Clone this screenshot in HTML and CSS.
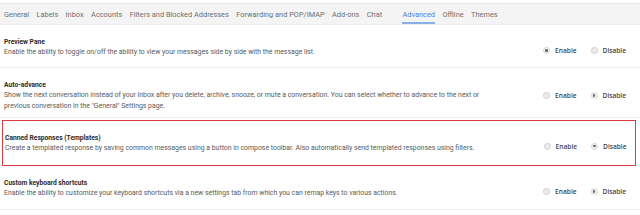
FILE: index.html
```html
<!DOCTYPE html>
<html>
<head>
<meta charset="utf-8">
<link rel="stylesheet" href="styles.css">
</head>
<body>
<div class="tabs">
  <span class="tab">General</span>
  <span class="tab">Labels</span>
  <span class="tab">Inbox</span>
  <span class="tab">Accounts</span>
  <span class="tab">Filters and Blocked Addresses</span>
  <span class="tab">Forwarding and POP/IMAP</span>
  <span class="tab">Add-ons</span>
  <span class="tab">Chat</span>
  <span class="tab active">Advanced</span>
  <span class="tab">Offline</span>
  <span class="tab">Themes</span>
</div>

<div class="row row-first">
  <div class="info">
    <div class="title">Preview Pane</div>
    <div class="desc">Enable the ability to toggle on/off the ability to view your messages side by side with the message list.</div>
  </div>
  <div class="opts">
    <span class="opt"><span class="radio on"></span>Enable</span>
    <span class="opt"><span class="radio"></span>Disable</span>
  </div>
</div>

<div class="row row-auto">
  <div class="info">
    <div class="title">Auto-advance</div>
    <div class="desc">Show the next conversation instead of your inbox after you delete, archive, snooze, or mute a conversation. You can select whether to advance to the next or previous conversation in the "General" Settings page.</div>
  </div>
  <div class="opts">
    <span class="opt"><span class="radio"></span>Enable</span>
    <span class="opt"><span class="radio on"></span>Disable</span>
  </div>
</div>

<div class="row row-canned">
  <div class="info">
    <div class="title">Canned Responses (Templates)</div>
    <div class="desc">Create a templated response by saving common messages using a button in compose toolbar. Also automatically send templated responses using filters.</div>
  </div>
  <div class="opts">
    <span class="opt"><span class="radio"></span>Enable</span>
    <span class="opt"><span class="radio on"></span>Disable</span>
  </div>
</div>

<div class="row row-custom">
  <div class="info">
    <div class="title">Custom keyboard shortcuts</div>
    <div class="desc">Enable the ability to customize your keyboard shortcuts via a new settings tab from which you can remap keys to various actions.</div>
  </div>
  <div class="opts">
    <span class="opt"><span class="radio"></span>Enable</span>
    <span class="opt"><span class="radio on"></span>Disable</span>
  </div>
</div>
</body>
</html>
```

FILE: styles.css
```css
html, body {
  margin: 0;
  padding: 0;
  background: #ffffff;
}
body {
  font-family: Roboto, "Liberation Sans", Arial, sans-serif;
  color: #222;
  width: 640px;
  height: 215px;
  overflow: hidden;
}
.tabs {
  margin-top: 3px;
  height: 20px;
  background: #f4f4f4;
  border-top: 1px solid #e6e6e6;
  border-bottom: 1px solid #ececec;
  display: flex;
  align-items: stretch;
  padding-left: 4px;
  gap: 7.4px;
  font-size: 7.4px;
  color: #707070;
}
.tab {
  display: flex;
  align-items: center;
  border-bottom: 2px solid transparent;
  box-sizing: border-box;
  padding-top: 2px;
}
.tab.active {
  color: #4d7ed6;
  border-bottom-color: #8ab0ea;
  margin-left: 13px;
}
.row {
  display: flex;
  align-items: center;
  padding: 0 4px;
  border-bottom: 1px solid #efefef;
}
.info {
  width: 478px;
}
.title {
  font-size: 6.7px;
  font-weight: 700;
  color: #2b2b2b;
  line-height: 10px;
}
.desc {
  font-size: 6.9px;
  color: #5a5a5a;
  line-height: 10.5px;
}
.row-first {
  height: 43px;
  padding-top: 3px;
  box-sizing: border-box;
}
.row-auto {
  height: 50px;
  padding-top: 6px;
  box-sizing: border-box;
}
.row-canned {
  margin: 2px 4px 0 2px;
  height: 46px;
  padding: 0 0 0 2px;
  border: 1.5px solid #dd3b40;
  box-sizing: border-box;
}
.row-custom {
  height: 44px;
  box-sizing: border-box;
  padding-top: 2px;
}
.opts {
  margin-left: auto;
  display: flex;
  gap: 14px;
  margin-right: 10px;
  padding-top: 6px;
}
.row-canned .opts {
  margin-right: 8.5px;
}
.row-auto .opts { padding-top: 0; }
.opt {
  display: flex;
  align-items: center;
  gap: 5px;
  font-family: "Open Sans", "Noto Sans", sans-serif;
  font-weight: 600;
  font-size: 6.6px;
  color: #444;
}
.radio {
  width: 5px;
  height: 5px;
  border-radius: 50%;
  border: 1px solid #cfcfcf;
  background: #ececec;
  position: relative;
}
.radio.on {
  background: #f1f1f1;
  border-color: #d6d6d6;
}
.radio.on::after {
  content: "";
  position: absolute;
  left: 1.2px;
  top: 1.2px;
  width: 2.6px;
  height: 2.6px;
  border-radius: 50%;
  background: #666;
}
```
